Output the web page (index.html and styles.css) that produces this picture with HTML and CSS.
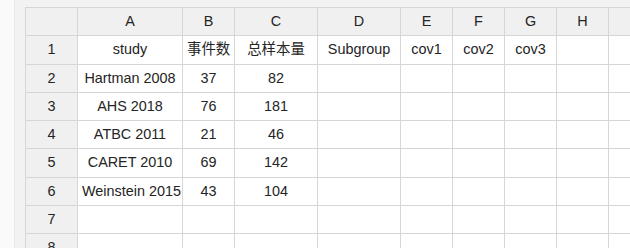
FILE: index.html
```html
<!DOCTYPE html>
<html lang="zh">
<head>
<meta charset="utf-8">
<title>Sheet</title>
<link rel="stylesheet" href="styles.css">
</head>
<body>
<div class="page">
  <div class="strip"></div>
  <div class="area">
    <div class="sheet">
      <div class="cell head corner"></div>
      <div class="cell head">A</div>
      <div class="cell head">B</div>
      <div class="cell head">C</div>
      <div class="cell head">D</div>
      <div class="cell head">E</div>
      <div class="cell head">F</div>
      <div class="cell head">G</div>
      <div class="cell head">H</div>
      <div class="cell head"></div>

      <div class="cell head">1</div>
      <div class="cell">study</div>
      <div class="cell">事件数</div>
      <div class="cell">总样本量</div>
      <div class="cell">Subgroup</div>
      <div class="cell">cov1</div>
      <div class="cell">cov2</div>
      <div class="cell">cov3</div>
      <div class="cell"></div>
      <div class="cell"></div>

      <div class="cell head">2</div>
      <div class="cell">Hartman 2008</div>
      <div class="cell">37</div>
      <div class="cell">82</div>
      <div class="cell"></div><div class="cell"></div><div class="cell"></div><div class="cell"></div><div class="cell"></div><div class="cell"></div>

      <div class="cell head">3</div>
      <div class="cell">AHS 2018</div>
      <div class="cell">76</div>
      <div class="cell">181</div>
      <div class="cell"></div><div class="cell"></div><div class="cell"></div><div class="cell"></div><div class="cell"></div><div class="cell"></div>

      <div class="cell head">4</div>
      <div class="cell">ATBC 2011</div>
      <div class="cell">21</div>
      <div class="cell">46</div>
      <div class="cell"></div><div class="cell"></div><div class="cell"></div><div class="cell"></div><div class="cell"></div><div class="cell"></div>

      <div class="cell head">5</div>
      <div class="cell">CARET 2010</div>
      <div class="cell">69</div>
      <div class="cell">142</div>
      <div class="cell"></div><div class="cell"></div><div class="cell"></div><div class="cell"></div><div class="cell"></div><div class="cell"></div>

      <div class="cell head">6</div>
      <div class="cell">Weinstein 2015</div>
      <div class="cell">43</div>
      <div class="cell">104</div>
      <div class="cell"></div><div class="cell"></div><div class="cell"></div><div class="cell"></div><div class="cell"></div><div class="cell"></div>

      <div class="cell head">7</div>
      <div class="cell"></div><div class="cell"></div><div class="cell"></div><div class="cell"></div><div class="cell"></div><div class="cell"></div><div class="cell"></div><div class="cell"></div><div class="cell"></div>

      <div class="cell head">8</div>
      <div class="cell"></div><div class="cell"></div><div class="cell"></div><div class="cell"></div><div class="cell"></div><div class="cell"></div><div class="cell"></div><div class="cell"></div><div class="cell"></div>
    </div>
  </div>
</div>
</body>
</html>
```

FILE: styles.css
```css
html, body {
  margin: 0;
  padding: 0;
  width: 630px;
  height: 248px;
  overflow: hidden;
  background: #f2f2f2;
}

.page {
  display: flex;
  width: 630px;
  height: 248px;
  overflow: hidden;
}

.strip {
  flex: 0 0 14px;
  background: #fafafa;
  border-right: 1px solid #ececec;
}

.area {
  flex: 1 1 auto;
  padding: 7px 0 0 10px;
  overflow: hidden;
}

.sheet {
  display: grid;
  grid-template-columns: 51px 104px 51px 82px 82px 51px 51px 51px 51px 40px;
  grid-auto-rows: 27.25px;
  gap: 1px;
  padding: 1px 0 0 1px;
  background: #d6d6d6;
  width: max-content;
  font-family: "Liberation Sans", Arial, "Noto Sans CJK SC", sans-serif;
  font-size: 14.4px;
  color: #242424;
}

.cell {
  background: #ffffff;
  text-align: center;
  line-height: 27.25px;
  white-space: nowrap;
  overflow: hidden;
  padding: 0 4px;
}

.head {
  background: #f0f0f0;
}
```
